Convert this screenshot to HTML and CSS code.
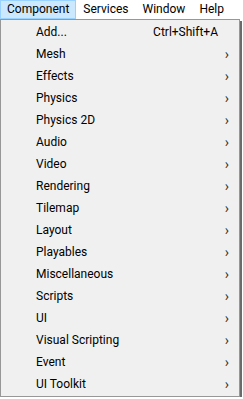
FILE: index.html
```html
<!DOCTYPE html>
<html lang="ko">
<head>
  <meta charset="UTF-8">
  <title>Component Menu</title>
  <link rel="stylesheet" href="styles.css">
</head>
<body>
  <div class="menubar">
    <span class="top-item active">Component</span>
    <span class="top-item">Services</span>
    <span class="top-item">Window</span>
    <span class="top-item">Help</span>
  </div>

  <ul class="dropdown">
    <li class="entry"><span class="label">Add...</span><span class="shortcut">Ctrl+Shift+A</span></li>
    <li class="entry"><span class="label">Mesh</span><span class="arrow">&#x203A;</span></li>
    <li class="entry"><span class="label">Effects</span><span class="arrow">&#x203A;</span></li>
    <li class="entry"><span class="label">Physics</span><span class="arrow">&#x203A;</span></li>
    <li class="entry"><span class="label">Physics 2D</span><span class="arrow">&#x203A;</span></li>
    <li class="entry"><span class="label">Audio</span><span class="arrow">&#x203A;</span></li>
    <li class="entry"><span class="label">Video</span><span class="arrow">&#x203A;</span></li>
    <li class="entry"><span class="label">Rendering</span><span class="arrow">&#x203A;</span></li>
    <li class="entry"><span class="label">Tilemap</span><span class="arrow">&#x203A;</span></li>
    <li class="entry"><span class="label">Layout</span><span class="arrow">&#x203A;</span></li>
    <li class="entry"><span class="label">Playables</span><span class="arrow">&#x203A;</span></li>
    <li class="entry"><span class="label">Miscellaneous</span><span class="arrow">&#x203A;</span></li>
    <li class="entry"><span class="label">Scripts</span><span class="arrow">&#x203A;</span></li>
    <li class="entry"><span class="label">UI</span><span class="arrow">&#x203A;</span></li>
    <li class="entry"><span class="label">Visual Scripting</span><span class="arrow">&#x203A;</span></li>
    <li class="entry"><span class="label">Event</span><span class="arrow">&#x203A;</span></li>
    <li class="entry"><span class="label">UI Toolkit</span><span class="arrow">&#x203A;</span></li>
  </ul>
</body>
</html>
```

FILE: styles.css
```css
body {
  margin: 0;
  padding: 0;
  background: #ffffff;
  font-family: Roboto, "Noto Sans CJK KR", sans-serif;
  font-size: 12px;
  color: #000000;
}
.menubar {
  display: flex;
  height: 19px;
  background: #ffffff;
}
.top-item {
  display: flex;
  align-items: center;
  padding: 0 6px;
  border: 1px solid transparent;
  line-height: 17px;
}
.top-item.active {
  background: #cce8ff;
  border-color: #99d1ff;
}
.dropdown {
  list-style: none;
  margin: 0;
  padding: 1px 0 1px 0;
  width: 240px;
  background: #f0f0f0;
  border: 1px solid #979797;
  box-shadow: 2px 2px 0 #6b6b6b;
  box-sizing: border-box;
  height: 378px;
}
.entry {
  display: flex;
  align-items: center;
  height: 22px;
  padding: 0 10px 0 35px;
}
.label {
  flex: 1;
}
.shortcut {
  margin-right: 11px;
}
.arrow {
  font-size: 14px;
  color: #333;
}
```
